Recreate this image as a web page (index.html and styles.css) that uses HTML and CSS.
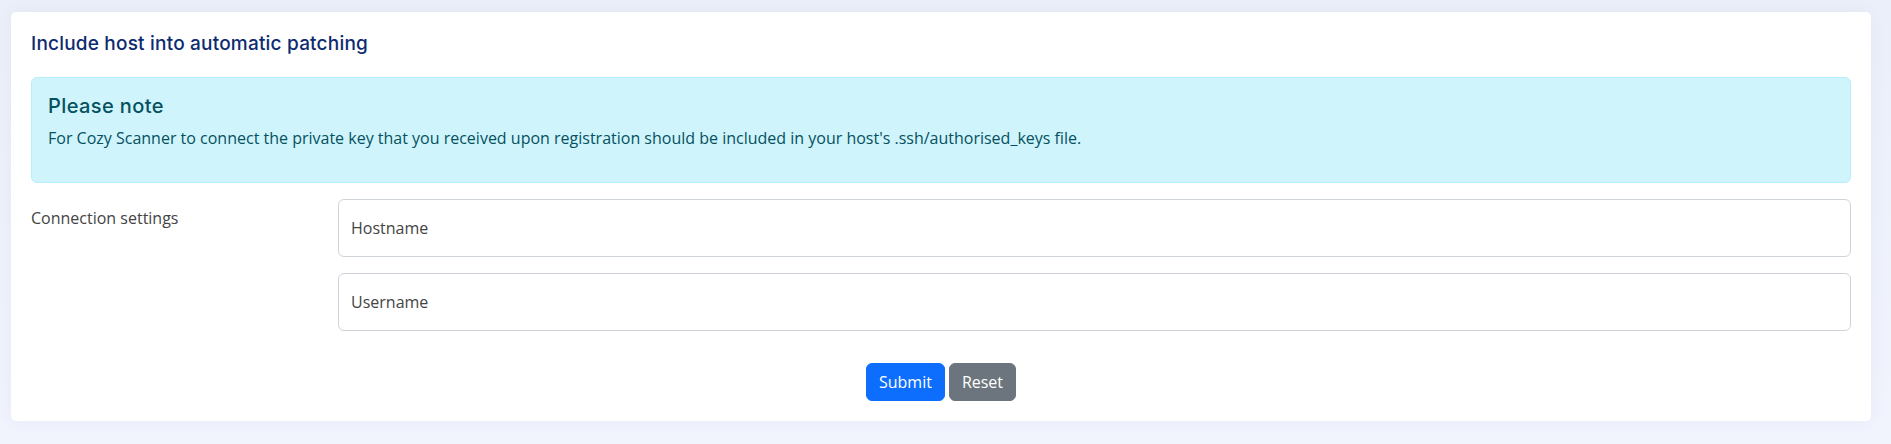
FILE: index.html
```html
<!DOCTYPE html>
<html lang="en">
<head>
    <meta charset="UTF-8">
    <meta name="viewport" content="width=device-width, initial-scale=1.0">
    <title>Automatic patching</title>
    <link rel="stylesheet" href="styles.css">
</head>
<body>
    <div class="card">
        <h5 class="card-title">Include host into automatic patching</h5>

        <div class="alert">
            <h4 class="alert-heading">Please note</h4>
            <p>For Cozy Scanner to connect the private key that you received upon registration should be included in your host's .ssh/authorised_keys file.</p>
        </div>

        <form id="patchForm">
            <div class="form-row">
                <label class="col-label">Connection settings</label>
                <div class="fields">
                    <div class="floating">
                        <input type="text" id="hostname" name="hostname" placeholder="Hostname">
                    </div>
                    <div class="floating">
                        <input type="text" id="username" name="username" placeholder="Username">
                    </div>
                </div>
            </div>

            <div class="actions">
                <button type="submit" class="btn btn-primary">Submit</button>
                <button type="reset" class="btn btn-secondary">Reset</button>
            </div>
        </form>
    </div>
</body>
</html>
```

FILE: styles.css
```css
body {
    font-family: "Open Sans", Arial, sans-serif;
    margin: 0;
    padding: 12px 20px 23px 11px;
    background: linear-gradient(180deg, #ebeff9 0%, #f1f4fd 100%);
    color: #444;
    font-size: 16px;
    line-height: 1.5;
}

.card {
    background: #fff;
    border-radius: 5px;
    padding: 20px 20px 20px 20px;
    box-shadow: 0 0 16px rgba(60, 80, 160, 0.06);
}

.card-title {
    font-family: Inter, "DejaVu Sans", sans-serif;
    font-weight: 500;
    font-size: 19px;
    letter-spacing: 0.2px;
    line-height: 24px;
    color: #0d2b70;
    margin: 0 0 21px;
}

.alert {
    background-color: #cff4fc;
    border: 1px solid #b6effb;
    border-radius: 6px;
    padding: 16px;
    color: #055160;
    margin-bottom: 16px;
}

.alert-heading {
    font-family: Inter, "DejaVu Sans", sans-serif;
    font-weight: 500;
    font-size: 20px;
    letter-spacing: 0.4px;
    line-height: 24px;
    margin: 0 0 8px;
}

.alert p {
    margin: 0 0 16px;
    font-size: 16px;
    line-height: 24px;
}

.form-row {
    display: grid;
    grid-template-columns: 307px 1fr;
}

.col-label {
    padding-top: 7px;
    line-height: 24px;
    color: #444;
}

.fields {
    display: flex;
    flex-direction: column;
    gap: 16px;
}

.floating input {
    width: 100%;
    height: 58px;
    box-sizing: border-box;
    padding: 16px 12px;
    border: 1px solid #ced4da;
    border-radius: 6px;
    font-family: "Open Sans", Arial, sans-serif;
    font-size: 16px;
    color: #444;
}

.floating input::placeholder {
    color: #444;
}

.actions {
    display: flex;
    justify-content: center;
    gap: 4px;
    margin-top: 32px;
}

.btn {
    font-family: "Open Sans", Arial, sans-serif;
    font-size: 16px;
    line-height: 24px;
    padding: 6px 12px;
    border: 1px solid transparent;
    border-radius: 6px;
    color: #fff;
    cursor: pointer;
}

.btn-primary {
    background-color: #0d6efd;
    border-color: #0d6efd;
}

.btn-secondary {
    background-color: #6c757d;
    border-color: #6c757d;
}
```
